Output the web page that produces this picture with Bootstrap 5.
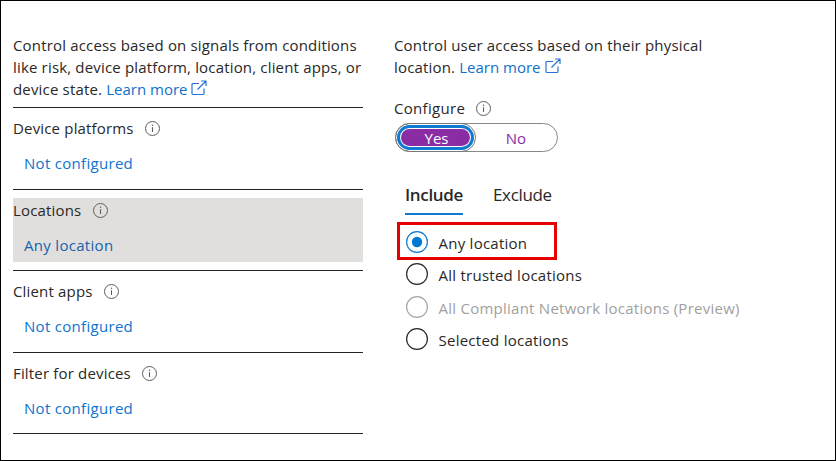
<!DOCTYPE html>
<html lang="en">
<head>
<meta charset="utf-8">
<title>Conditions</title>
<link href="https://cdn.jsdelivr.net/npm/bootstrap@5.3.0/dist/css/bootstrap.min.css" rel="stylesheet">
<style>
body{font-family:"Open Sans","Noto Sans",sans-serif;font-size:15px;line-height:22px;letter-spacing:.17px;color:#292827;background:#fff}
.frame{width:836px;height:461px;border:1px solid #000;padding:33px 0 0 12px}
.left-pane{width:350px}
.right-pane{margin-left:31px;width:400px}
.intro{margin-bottom:7px}
.azure{color:#1070cc;letter-spacing:0}
.cond{border-top:1px solid #222;padding-top:8px;height:81.5px}
.cond:last-child{border-bottom:1px solid #222;height:82px}
.cond-in{height:64px}
.chosen{background:#e1dfdd}
.cond-in .lab{height:25px;line-height:27px}
.cond-in .val{height:25px;line-height:25px;padding-left:11px;margin-top:10px;letter-spacing:.3px;color:#0d74cf}
.chosen .val{color:#1563ae}
.ext{width:16px;height:16px;margin-left:4px;vertical-align:-1px}
.inf{width:15px;height:15px;margin-left:11.500px;flex:none}
.conf{margin-top:19px;height:22px;letter-spacing:.3px}
.conf .inf{margin-left:11px}
.toggle{margin:4px 0 0 1px;width:163px;height:29px;border:1px solid #8a8886;border-radius:15px;letter-spacing:0}
.yes{width:81px;height:29px;margin:-1px 0 0 -1px;border:1px solid #777;border-radius:15px;padding:1px}
.yes .ring{border:3px solid #0f7ad2;border-radius:13px;height:25px;padding:1px}
.yes .fill{background:#8a2da5;color:#fff;border-radius:9px;height:17px;line-height:18px;padding-left:2px}
.no{color:#8a2da5;width:80px;line-height:28px}
.tabs{margin:30px 0 0 11px;gap:30px;font-size:17px;letter-spacing:-.35px}
.tabs>div{height:33px;line-height:25px}
.tabs .on{width:58px;font-weight:600;border-bottom:2px solid #0f7ad2}
.hl{border:3px solid #e60000;width:160px;height:38px;margin:7px 0 0 3px;padding:2px 0 0 6px}
.opt{letter-spacing:.25px}
.hl~.opt{margin-left:12px;height:32.5px}
.hl+.opt{margin-top:-2px}
.rad{width:22px;height:22px;margin-right:10.500px;flex:none}
.opt>span{padding-top:2px}
.off{color:#a19f9d}
</style>
</head>
<body>
<svg class="d-none" xmlns="http://www.w3.org/2000/svg">
<symbol id="info" viewBox="0 0 15 15"><circle cx="7.5" cy="7.5" r="7" fill="none" stroke="#605e5c"/><path d="M7.5 6.2V11" stroke="#605e5c" stroke-width="1.1"/><circle cx="7.5" cy="4.2" r=".75" fill="#605e5c"/></symbol>
<symbol id="ext" viewBox="0 0 16 16"><path d="M8 3.5H2Q1 3.5 1 4.5V13.500Q1 14.500 2 14.500H12Q13 14.500 13 13.500V8.500M6.500 9.500L15 1M10 1H15V6" fill="none" stroke="#2874dc" stroke-width="1.2"/></symbol>
</svg>
<div class="frame d-flex align-items-start">
  <section class="left-pane">
    <div class="intro text-nowrap">Control access based on signals from conditions<br>like risk, device platform, location, client apps, or<br>device state. <a class="azure text-decoration-none" href="#">Learn more<svg class="ext"><use href="#ext"/></svg></a></div>
    <div class="cond"><div class="cond-in"><div class="lab d-flex align-items-center">Device platforms<svg class="inf"><use href="#info"/></svg></div><div class="val">Not configured</div></div></div>
    <div class="cond"><div class="cond-in chosen"><div class="lab d-flex align-items-center">Locations<svg class="inf"><use href="#info"/></svg></div><div class="val">Any location</div></div></div>
    <div class="cond"><div class="cond-in"><div class="lab d-flex align-items-center">Client apps<svg class="inf"><use href="#info"/></svg></div><div class="val">Not configured</div></div></div>
    <div class="cond"><div class="cond-in"><div class="lab d-flex align-items-center">Filter for devices<svg class="inf"><use href="#info"/></svg></div><div class="val">Not configured</div></div></div>
  </section>
  <section class="right-pane">
    <div class="text-nowrap">Control user access based on their physical<br>location. <a class="azure text-decoration-none" href="#">Learn more<svg class="ext"><use href="#ext"/></svg></a></div>
    <div class="conf d-flex align-items-center">Configure<svg class="inf"><use href="#info"/></svg></div>
    <div class="toggle d-flex text-center"><div class="yes"><div class="ring"><div class="fill">Yes</div></div></div><div class="no">No</div></div>
    <div class="tabs d-flex"><div class="on">Include</div><div>Exclude</div></div>
    <div class="hl d-flex align-items-center"><div class="opt d-flex align-items-center"><svg class="rad" viewBox="0 0 22 22"><circle cx="11" cy="11" r="10.400" fill="#fff" stroke="#0f7ad2" stroke-width="1.200"/><circle cx="11" cy="11" r="5.200" fill="#0078d4"/></svg><span>Any location</span></div></div>
    <div class="opt d-flex align-items-center"><svg class="rad" viewBox="0 0 22 22"><circle cx="11" cy="11" r="10.400" fill="#fff" stroke="#292827" stroke-width="1.200"/></svg><span>All trusted locations</span></div>
    <div class="opt off d-flex align-items-center"><svg class="rad" viewBox="0 0 22 22"><circle cx="11" cy="11" r="10.400" fill="#fff" stroke="#a8a6a4" stroke-width="1.200"/></svg><span>All Compliant Network locations (Preview)</span></div>
    <div class="opt d-flex align-items-center"><svg class="rad" viewBox="0 0 22 22"><circle cx="11" cy="11" r="10.400" fill="#fff" stroke="#292827" stroke-width="1.200"/></svg><span>Selected locations</span></div>
  </section>
</div>
<script src="https://cdn.jsdelivr.net/npm/bootstrap@5.3.0/dist/js/bootstrap.bundle.min.js"></script>
</body>
</html>
